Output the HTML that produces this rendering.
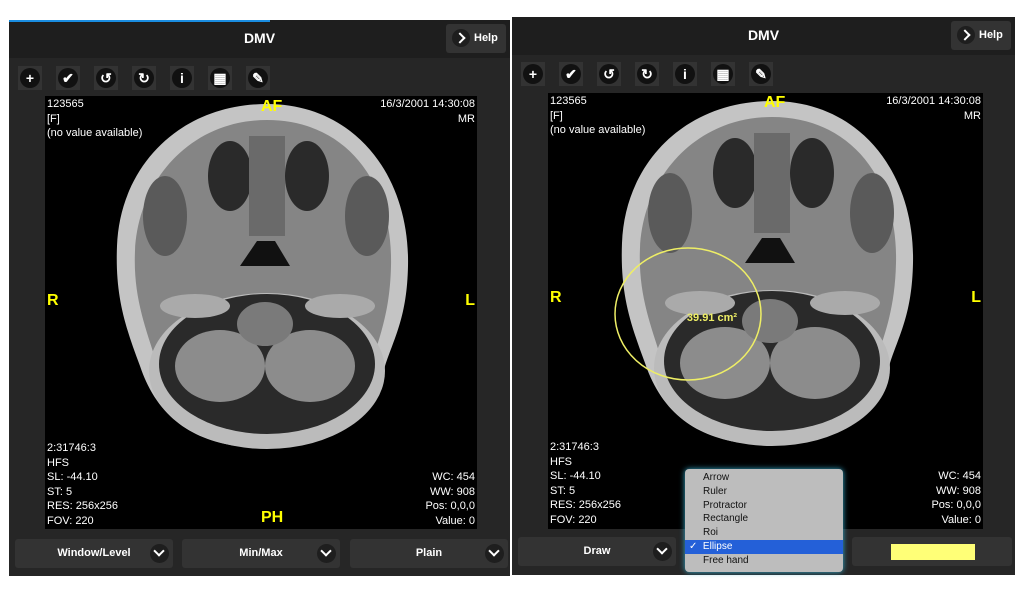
<!DOCTYPE html><html><head><style>
body{margin:0;width:1024px;height:600px;background:#fff;position:relative;overflow:hidden;font-family:"Liberation Sans",Arial,sans-serif}
.p{position:absolute;background:#262626}
.hd{position:absolute;left:0;right:0;top:0;height:38px;background:#1e1e1e;color:#fff;font-weight:bold;font-size:14px;text-align:center;line-height:36px}
.help{position:absolute;right:4px;top:4px;width:60px;height:29px;background:#333;border-radius:3px;font-size:11px;line-height:29px;color:#fff;text-align:left}
.help i{display:inline-block;width:18px;height:18px;border-radius:50%;background:#1e1e1e;margin:5px 4px 0 6px;vertical-align:top;position:relative}
.help i:after{content:"";position:absolute;left:4px;top:5px;width:6px;height:6px;border-right:2px solid #fff;border-top:2px solid #fff;transform:rotate(45deg)}
.tb{position:absolute;width:24px;height:24px;background:#333;}
.tb b{position:absolute;left:2px;top:2px;width:20px;height:20px;border-radius:50%;background:#111;color:#fff;font-size:14px;text-align:center;line-height:20px;font-weight:bold}
.img{position:absolute;background:#000;overflow:hidden}
.t{position:absolute;color:#fff;font-size:11px;line-height:14.5px}
.y{position:absolute;color:#ff0;font-weight:bold;font-size:16px}
.sel{position:absolute;height:29px;background:#333;border-radius:3px;color:#fff;font-weight:bold;font-size:11px;line-height:29px;text-align:center}
.sel i{position:absolute;right:4px;top:5px;width:19px;height:19px;border-radius:50%;background:#1e1e1e}
.sel i:after{content:"";position:absolute;left:5px;top:3px;width:6px;height:6px;border-right:2px solid #fff;border-bottom:2px solid #fff;transform:rotate(45deg)}
</style></head><body>
<svg width="0" height="0" style="position:absolute"><defs>
<g id="head">
<path d="M222,8 C310,8 365,80 363,170 C362,220 350,240 340,270 C325,330 280,352 222,352 C160,352 115,330 95,270 C80,230 70,200 72,150 C75,70 135,8 222,8 Z" fill="#c4c4c4"/>
<path d="M222,24 C300,24 348,85 346,170 C345,215 335,240 326,268 C312,320 272,338 222,338 C168,338 128,320 112,268 C100,230 88,200 90,155 C93,85 145,24 222,24 Z" fill="#858585"/>
<ellipse cx="120" cy="120" rx="22" ry="40" fill="#5a5a5a"/>
<ellipse cx="322" cy="120" rx="22" ry="40" fill="#5a5a5a"/>
<ellipse cx="185" cy="80" rx="22" ry="35" fill="#2a2a2a"/>
<ellipse cx="262" cy="80" rx="22" ry="35" fill="#2a2a2a"/>
<rect x="204" y="40" width="36" height="100" fill="#6a6a6a"/>
<path d="M195,170 L245,170 L230,145 L212,145 Z" fill="#111"/>
<ellipse cx="222" cy="275" rx="118" ry="78" fill="#bbb"/>
<ellipse cx="222" cy="268" rx="108" ry="70" fill="#2a2a2a"/>
<ellipse cx="175" cy="270" rx="45" ry="36" fill="#8c8c8c"/>
<ellipse cx="265" cy="270" rx="45" ry="36" fill="#8c8c8c"/>
<ellipse cx="220" cy="228" rx="28" ry="22" fill="#7a7a7a"/>
<ellipse cx="150" cy="210" rx="35" ry="12" fill="#aaa"/>
<ellipse cx="295" cy="210" rx="35" ry="12" fill="#aaa"/>
</g></defs></svg>

<div style="position:absolute;left:9px;top:20px;width:261px;height:2px;background:#1a8de0;z-index:2"></div>
<div class="p" style="left:9px;top:20px;width:501px;height:556px">
<div class="hd">DMV<div class="help"><i></i>Help</div></div>
<div class="tb" style="left:9px;top:46px"><b>+</b></div>
<div class="tb" style="left:47px;top:46px"><b>✔</b></div>
<div class="tb" style="left:85px;top:46px"><b>↺</b></div>
<div class="tb" style="left:123px;top:46px"><b>↻</b></div>
<div class="tb" style="left:161px;top:46px"><b>i</b></div>
<div class="tb" style="left:199px;top:46px"><b>▦</b></div>
<div class="tb" style="left:237px;top:46px"><b>✎</b></div>
<div class="img" style="left:36px;top:76px;width:432px;height:433px">
<svg width="432" height="433" style="position:absolute;left:0;top:0"><use href="#head"/></svg>
<div class="t" style="left:2px;top:1px">123565<br>[F]<br>(no value available)</div>
<div class="t" style="right:2px;top:1px;text-align:right">16/3/2001 14:30:08<br>MR</div>
<div class="y" style="left:216px;top:2px">AF</div>
<div class="y" style="left:2px;top:196px">R</div>
<div class="y" style="right:2px;top:196px">L</div>
<div class="y" style="left:216px;top:413px">PH</div>
<div class="t" style="left:2px;top:345px">2:31746:3<br>HFS<br>SL: -44.10<br>ST: 5<br>RES: 256x256<br>FOV: 220</div>
<div class="t" style="right:2px;top:374px;text-align:right">WC: 454<br>WW: 908<br>Pos: 0,0,0<br>Value: 0</div>
</div>
<div class="sel" style="left:6px;top:519px;width:158px">Window/Level<i></i></div>
<div class="sel" style="left:173px;top:519px;width:158px">Min/Max<i></i></div>
<div class="sel" style="left:341px;top:519px;width:158px">Plain<i></i></div>
</div>

<div class="p" style="left:512px;top:17px;width:503px;height:558px">
<div class="hd">DMV<div class="help"><i></i>Help</div></div>
<div class="tb" style="left:9px;top:45px"><b>+</b></div>
<div class="tb" style="left:47px;top:45px"><b>✔</b></div>
<div class="tb" style="left:85px;top:45px"><b>↺</b></div>
<div class="tb" style="left:123px;top:45px"><b>↻</b></div>
<div class="tb" style="left:161px;top:45px"><b>i</b></div>
<div class="tb" style="left:199px;top:45px"><b>▦</b></div>
<div class="tb" style="left:237px;top:45px"><b>✎</b></div>
<div class="img" style="left:36px;top:76px;width:435px;height:436px">
<svg width="435" height="436" style="position:absolute;left:0;top:0"><use href="#head" transform="translate(2,0)"/>
<ellipse cx="140" cy="221" rx="73" ry="66" fill="none" stroke="#ee6" stroke-width="1.5"/>
<text x="164" y="228" fill="#ee6" font-size="11" font-weight="bold" font-family="Liberation Sans" text-anchor="middle">39.91 cm²</text></svg>
<div class="t" style="left:2px;top:1px">123565<br>[F]<br>(no value available)</div>
<div class="t" style="right:2px;top:1px;text-align:right">16/3/2001 14:30:08<br>MR</div>
<div class="y" style="left:216px;top:1px">AF</div>
<div class="y" style="left:2px;top:196px">R</div>
<div class="y" style="right:2px;top:196px">L</div>
<div class="t" style="left:2px;top:347px">2:31746:3<br>HFS<br>SL: -44.10<br>ST: 5<br>RES: 256x256<br>FOV: 220</div>
<div class="t" style="right:2px;top:376px;text-align:right">WC: 454<br>WW: 908<br>Pos: 0,0,0<br>Value: 0</div>
</div>
<div class="sel" style="left:6px;top:520px;width:158px">Draw<i></i></div>
<div class="sel" style="left:340px;top:520px;width:160px"><div style="position:absolute;left:39px;top:7px;width:84px;height:16px;background:#ff7"></div></div>
</div>
<div style="position:absolute;left:685px;top:469px;width:158px;height:103px;background:#bdbdbd;border-radius:4px;box-shadow:0 0 6px #3ac;font-size:10px;color:#111;line-height:13.8px;padding-top:2px;box-sizing:border-box">
<div style="padding-left:18px">Arrow</div><div style="padding-left:18px">Ruler</div><div style="padding-left:18px">Protractor</div><div style="padding-left:18px">Rectangle</div><div style="padding-left:18px">Roi</div>
<div style="padding-left:4px;background:#2460d8;color:#fff">✓&nbsp; Ellipse</div><div style="padding-left:18px">Free hand</div></div>
</body></html>
